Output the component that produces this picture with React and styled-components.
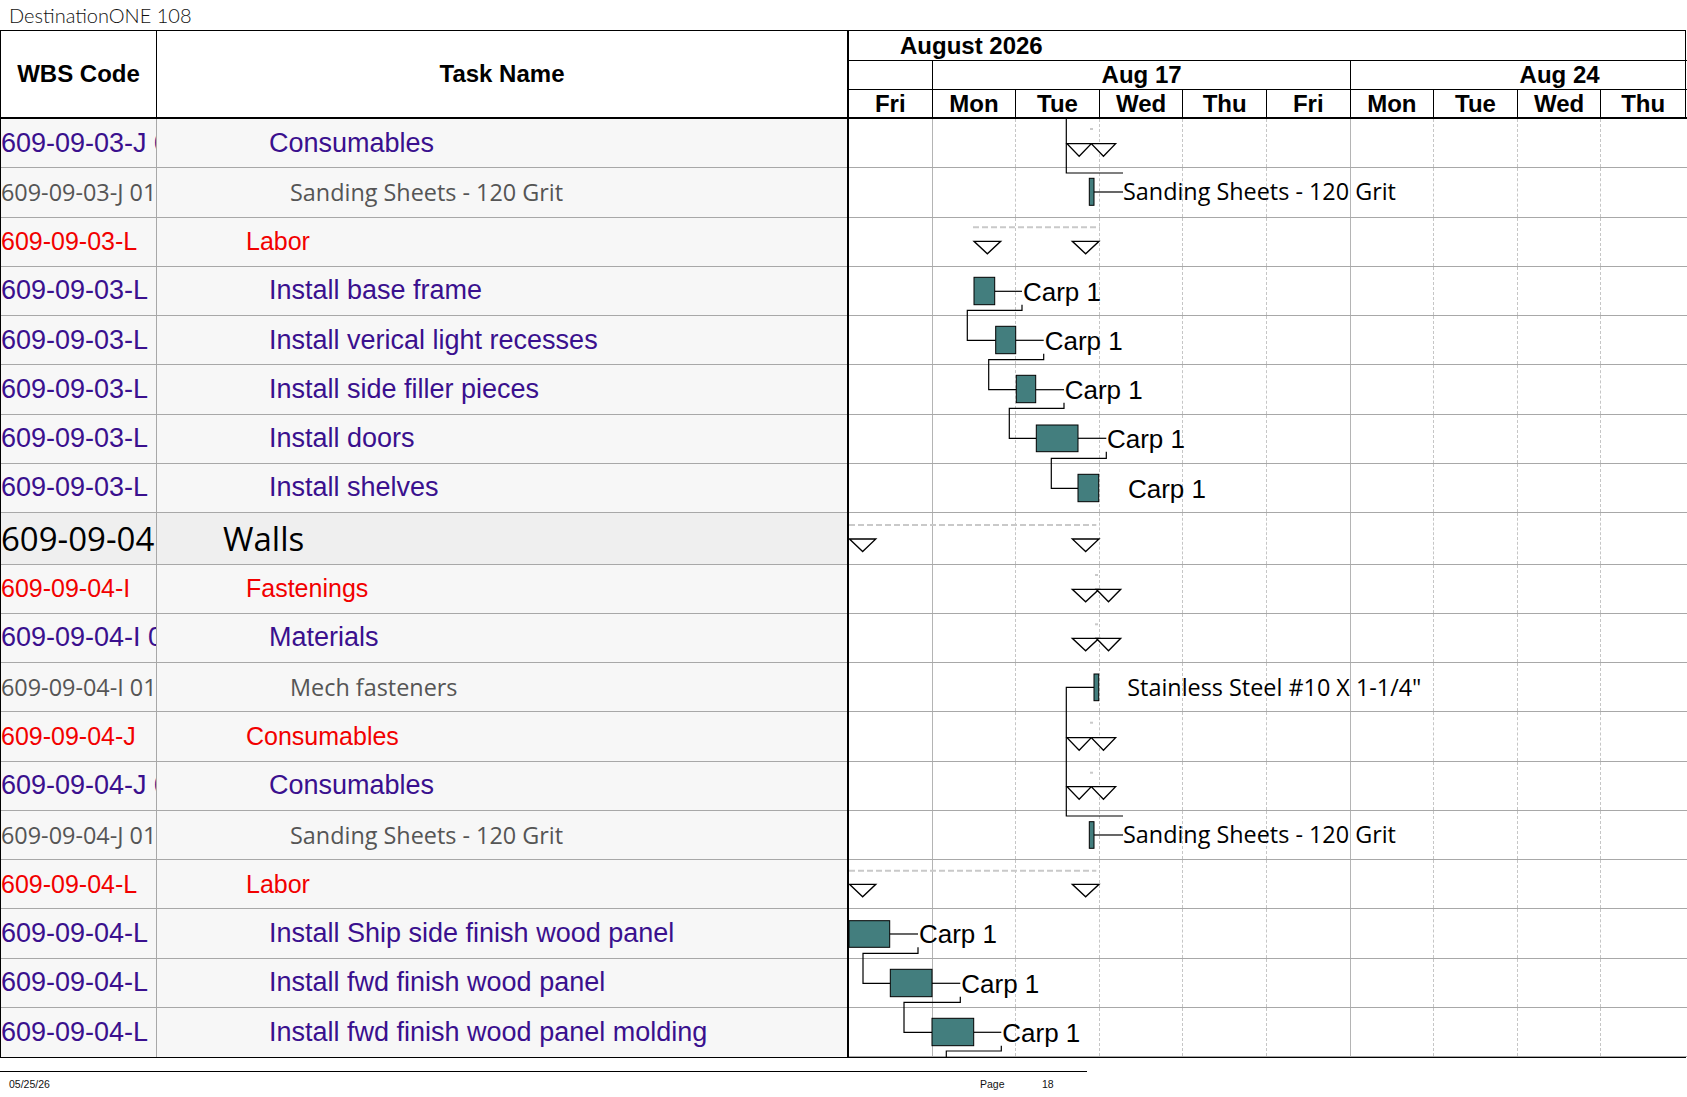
import React from "react";
import styled, { createGlobalStyle } from "styled-components";

const GlobalStyle = createGlobalStyle`
  html, body {
    margin: 0;
    padding: 0;
    background: #fff;
  }
  body {
    font-family: "Liberation Sans", Arial, sans-serif;
  }
`;

const DAY_W = 83.6;
const ROW_H = 49.25;
const WALLS_H = 51.6;

const KIND = {
  purple: { color: "#3a108e", font: '"Liberation Sans", Arial, sans-serif', size: 27, indent: 112 },
  red: { color: "#f20000", font: '"Liberation Sans", Arial, sans-serif', size: 25, indent: 89 },
  gray: { color: "#555555", font: '"Open Sans", sans-serif', size: 23.4, indent: 133 },
  walls: { color: "#000000", font: '"Open Sans", sans-serif', size: 33, indent: 66 },
};

const tasks = [
  { code: "609-09-03-J 01", name: "Consumables", kind: "purple" },
  { code: "609-09-03-J 01.01", name: "Sanding Sheets - 120 Grit", kind: "gray" },
  { code: "609-09-03-L", name: "Labor", kind: "red" },
  { code: "609-09-03-L", name: "Install base frame", kind: "purple" },
  { code: "609-09-03-L", name: "Install verical light recesses", kind: "purple" },
  { code: "609-09-03-L", name: "Install side filler pieces", kind: "purple" },
  { code: "609-09-03-L", name: "Install doors", kind: "purple" },
  { code: "609-09-03-L", name: "Install shelves", kind: "purple" },
  { code: "609-09-04", name: "Walls", kind: "walls" },
  { code: "609-09-04-I", name: "Fastenings", kind: "red" },
  { code: "609-09-04-I 01", name: "Materials", kind: "purple" },
  { code: "609-09-04-I 01.01", name: "Mech fasteners", kind: "gray" },
  { code: "609-09-04-J", name: "Consumables", kind: "red" },
  { code: "609-09-04-J 01", name: "Consumables", kind: "purple" },
  { code: "609-09-04-J 01.01", name: "Sanding Sheets - 120 Grit", kind: "gray" },
  { code: "609-09-04-L", name: "Labor", kind: "red" },
  { code: "609-09-04-L", name: "Install Ship side finish wood panel", kind: "purple" },
  { code: "609-09-04-L", name: "Install fwd finish wood panel", kind: "purple" },
  { code: "609-09-04-L", name: "Install fwd finish wood panel molding", kind: "purple" },
];

const days = ["Fri", "Mon", "Tue", "Wed", "Thu", "Fri", "Mon", "Tue", "Wed", "Thu"];

// chart drawing, coordinates relative to the top-left of the gantt body
const bars = [
  [240.3, 245, 59.3, 86.3],
  [125, 145.7, 158.3, 185.7],
  [146.7, 166.7, 207.3, 234.7],
  [167.3, 186.7, 256.3, 283.7],
  [187.3, 229, 306, 332.7],
  [229, 249.7, 355.3, 382.7],
  [245, 249.7, 555, 581.7],
  [240.3, 245, 702.7, 729.3],
  [0, 40.7, 801.7, 828.3],
  [41.3, 83, 850.3, 877.7],
  [83, 124.7, 899.3, 926.7],
];

const links = [
  "217.3,0 217.3,54 274,54",
  "245,73 274,73",
  "145.7,172.3 173,172.3",
  "173,185.7 173,191.3 118.3,191.3 118.3,221.3 146.7,221.3",
  "166.7,221.3 194.7,221.3",
  "194.7,234.7 194.7,240.7 139.7,240.7 139.7,270.7 167.3,270.7",
  "186.7,270.7 215,270.7",
  "215,283.7 215,289.3 160.3,289.3 160.3,319.3 187.3,319.3",
  "229,319.3 257.3,319.3",
  "257.3,332.7 257.3,339.3 202.3,339.3 202.3,369.3 229,369.3",
  "245,568.3 217.3,568.3 217.3,697 274,697",
  "245,716 274,716",
  "40.7,815 69,815",
  "69,828.3 69,834.3 14,834.3 14,864.3 41.3,864.3",
  "83,864.3 111.3,864.3",
  "111.3,877.7 111.3,883.3 55,883.3 55,913.3 83,913.3",
  "124.7,913.3 152.3,913.3",
  "152.3,926.7 152.3,932 97.3,932 97.3,945",
];

const summaries = [
  [218, 24.3, 24.7], [242.3, 24.3, 24.7],
  [125, 26.7, 122.3], [223.3, 26.7, 122.3],
  [0.5, 26.3, 420], [223.3, 26.7, 420],
  [223.3, 26.7, 470.3], [247.3, 24.4, 470.3],
  [223.3, 26.7, 519.3], [247.3, 24.4, 519.3],
  [218, 24.3, 618.7], [242.3, 24.3, 618.7],
  [218, 24.3, 667.7], [242.3, 24.3, 667.7],
  [0.5, 26.3, 765.3], [223.3, 26.7, 765.3],
];

const traces = [
  [124, 251, 108.3],
  [0, 247.3, 406],
  [0, 247.3, 751.7],
  [241, 244, 10],
  [246, 249, 456],
  [246, 249, 505.3],
  [241, 244, 603.7],
  [241, 244, 653.7],
];

const labels = [
  { x: 274, y: 73, text: "Sanding Sheets - 120 Grit", kind: "item" },
  { x: 174, y: 172.3, text: "Carp 1", kind: "crew" },
  { x: 195.7, y: 221.3, text: "Carp 1", kind: "crew" },
  { x: 215.7, y: 270.7, text: "Carp 1", kind: "crew" },
  { x: 258, y: 319.3, text: "Carp 1", kind: "crew" },
  { x: 279, y: 369.3, text: "Carp 1", kind: "crew" },
  { x: 278.3, y: 569, text: "Stainless Steel #10 X 1-1/4\"", kind: "item" },
  { x: 274, y: 716, text: "Sanding Sheets - 120 Grit", kind: "item" },
  { x: 70, y: 815, text: "Carp 1", kind: "crew" },
  { x: 112.3, y: 864.3, text: "Carp 1", kind: "crew" },
  { x: 153.3, y: 913.3, text: "Carp 1", kind: "crew" },
];

const LABEL_FONT = {
  crew: { family: "Liberation Sans, Arial, sans-serif", size: 26, cap: 0.716 },
  item: { family: "Open Sans, sans-serif", size: 23.4, cap: 0.714 },
};

const Page = styled.div`
  width: 1687px;
  height: 1097px;
  overflow: hidden;
`;

const TitleBar = styled.div`
  height: 30px;
  padding-left: 9px;
  font-family: Lato, "Open Sans", sans-serif;
  font-weight: 300;
  font-size: 20px;
  line-height: 30px;
  color: #111;
`;

const Sheet = styled.div`
  display: flex;
  width: 1686px;
  box-sizing: border-box;
  border: 1px solid #000;
`;

const LeftTable = styled.div`
  display: flex;
  flex-direction: column;
  width: 846px;
  flex: none;
`;

const HeadRow = styled.div`
  display: flex;
  height: 88px;
  box-sizing: border-box;
  border-bottom: 2px solid #000;
`;

const HeadCell = styled.div`
  width: ${({ $w }) => ($w ? `${$w}px` : "auto")};
  flex: ${({ $w }) => ($w ? "none" : "1")};
  box-sizing: border-box;
  border-right: ${({ $divider }) => ($divider ? "1px solid #000" : "none")};
  display: flex;
  align-items: center;
  justify-content: center;
  font-weight: bold;
  font-size: 24px;
  color: #000;
`;

const TableRow = styled.div`
  display: flex;
  height: ${({ $h }) => $h}px;
  box-sizing: border-box;
  border-bottom: 1px solid #a8a8a8;
  background: ${({ $kind }) => ($kind === "walls" ? "#efefef" : "#f7f7f7")};

  &:last-child {
    border-bottom: none;
  }
`;

const CodeCell = styled.div`
  width: 156px;
  flex: none;
  box-sizing: border-box;
  border-right: 1px solid #a8a8a8;
  display: flex;
  align-items: center;
  overflow: hidden;
  white-space: nowrap;
  color: ${({ $kind }) => KIND[$kind].color};
  font-family: ${({ $kind }) => KIND[$kind].font};
  font-size: ${({ $kind }) => KIND[$kind].size}px;
`;

const NameCell = styled.div`
  flex: 1;
  display: flex;
  align-items: center;
  overflow: hidden;
  white-space: nowrap;
  padding-left: ${({ $kind }) => KIND[$kind].indent}px;
  color: ${({ $kind }) => KIND[$kind].color};
  font-family: ${({ $kind }) => KIND[$kind].font};
  font-size: ${({ $kind }) => KIND[$kind].size}px;
`;

const Gantt = styled.div`
  display: flex;
  flex-direction: column;
  flex: 1;
  border-left: 2px solid #000;
`;

const MonthRow = styled.div`
  height: 30px;
  box-sizing: border-box;
  border-bottom: 1px solid #000;
  padding-left: 51px;
  display: flex;
  align-items: center;
  font-weight: bold;
  font-size: 24px;
`;

const WeekRow = styled.div`
  display: flex;
  height: 29px;
  box-sizing: border-box;
  border-bottom: 1px solid #000;
`;

const WeekCell = styled.div`
  width: ${({ $days }) => ($days ? `${$days * DAY_W}px` : "auto")};
  flex: ${({ $days }) => ($days ? "none" : "1")};
  box-sizing: border-box;
  border-right: ${({ $days }) => ($days ? "1px solid #000" : "none")};
  overflow: hidden;
  display: flex;
  align-items: center;
`;

const WeekLabel = styled.span`
  width: ${5 * DAY_W}px;
  flex: none;
  text-align: center;
  font-weight: bold;
  font-size: 24px;
`;

const DayRow = styled.div`
  display: flex;
  height: 29px;
  box-sizing: border-box;
  border-bottom: 2px solid #000;
`;

const DayHead = styled.div`
  width: ${DAY_W}px;
  flex: none;
  box-sizing: border-box;
  border-right: 1px solid #000;
  display: flex;
  align-items: center;
  justify-content: center;
  font-weight: bold;
  font-size: 24px;

  &:last-child {
    border-right: none;
  }
`;

const GanttBody = styled.div`
  position: relative;
  display: flex;
  flex-direction: column;
  background: #fff;
`;

const GanttRow = styled.div`
  display: flex;
  height: ${({ $h }) => $h}px;
  box-sizing: border-box;
  border-bottom: 1px solid #a8a8a8;

  &:last-child {
    border-bottom: none;
  }
`;

const DayCell = styled.div`
  width: ${DAY_W}px;
  flex: none;
  box-sizing: border-box;
  border-right: ${({ $weekEnd }) => ($weekEnd ? "1px solid #b4b4b4" : "1px dashed #c6c6c6")};

  &:last-child {
    border-right: none;
  }
`;

const ChartLayer = styled.svg`
  position: absolute;
  top: 0;
  left: 0;
  overflow: hidden;
  pointer-events: none;
`;

const Footer = styled.footer`
  width: 1087px;
  margin-top: 13px;
  padding-top: 6px;
  border-top: 1px solid #000;
  display: flex;
  font-family: "Liberation Sans", Arial, sans-serif;
  font-size: 10.5px;
  line-height: 12px;
  color: #111;
`;

const FooterDate = styled.span`
  width: 980px;
  padding-left: 9px;
  box-sizing: border-box;
`;

const FooterPage = styled.span`
  width: 62px;
`;

const bodyHeight = tasks.reduce((sum, t) => sum + (t.kind === "walls" ? WALLS_H : ROW_H), 0);

const Chart = () => (
  <ChartLayer width={10 * DAY_W} height={bodyHeight} viewBox={`0 0 ${10 * DAY_W} ${bodyHeight}`}>
    {traces.map(([x1, x2, y], i) => (
      <line key={`t${i}`} x1={x1} x2={x2} y1={y} y2={y} stroke="#c9c9c9" strokeWidth="2" strokeDasharray="6 3" />
    ))}
    {links.map((pts, i) => (
      <polyline key={`l${i}`} points={pts} fill="none" stroke="#000" strokeWidth="1.2" />
    ))}
    {bars.map(([x1, x2, y1, y2], i) => (
      <rect key={`b${i}`} x={x1} y={y1} width={x2 - x1} height={y2 - y1} fill="#437e7e" stroke="#000" strokeWidth="1" />
    ))}
    {summaries.map(([x, w, y], i) => (
      <polygon
        key={`s${i}`}
        points={`${x},${y} ${x + w},${y} ${x + w / 2},${y + 12.5}`}
        fill="#fff"
        stroke="#000"
        strokeWidth="1.3"
      />
    ))}
    {labels.map((l, i) => {
      const f = LABEL_FONT[l.kind];
      return (
        <text key={`x${i}`} x={l.x} y={l.y + (f.size * f.cap) / 2} fontFamily={f.family} fontSize={f.size} fill="#000">
          {l.text}
        </text>
      );
    })}
  </ChartLayer>
);

const App = () => (
  <Page>
    <GlobalStyle />
    <TitleBar>DestinationONE 108</TitleBar>
    <Sheet>
      <LeftTable>
        <HeadRow>
          <HeadCell $w={156} $divider>WBS Code</HeadCell>
          <HeadCell>Task Name</HeadCell>
        </HeadRow>
        {tasks.map((t, i) => (
          <TableRow key={i} $kind={t.kind} $h={t.kind === "walls" ? WALLS_H : ROW_H}>
            <CodeCell $kind={t.kind}>{t.code}</CodeCell>
            <NameCell $kind={t.kind}>{t.name}</NameCell>
          </TableRow>
        ))}
      </LeftTable>
      <Gantt>
        <MonthRow>August 2026</MonthRow>
        <WeekRow>
          <WeekCell $days={1} />
          <WeekCell $days={5}>
            <WeekLabel>Aug 17</WeekLabel>
          </WeekCell>
          <WeekCell>
            <WeekLabel>Aug 24</WeekLabel>
          </WeekCell>
        </WeekRow>
        <DayRow>
          {days.map((d, i) => (
            <DayHead key={i}>{d}</DayHead>
          ))}
        </DayRow>
        <GanttBody>
          {tasks.map((t, i) => (
            <GanttRow key={i} $h={t.kind === "walls" ? WALLS_H : ROW_H}>
              {days.map((d, j) => (
                <DayCell key={j} $weekEnd={j === 0 || j === 5} />
              ))}
            </GanttRow>
          ))}
          <Chart />
        </GanttBody>
      </Gantt>
    </Sheet>
    <Footer>
      <FooterDate>05/25/26</FooterDate>
      <FooterPage>Page</FooterPage>
      <span>18</span>
    </Footer>
  </Page>
);

export default App;
